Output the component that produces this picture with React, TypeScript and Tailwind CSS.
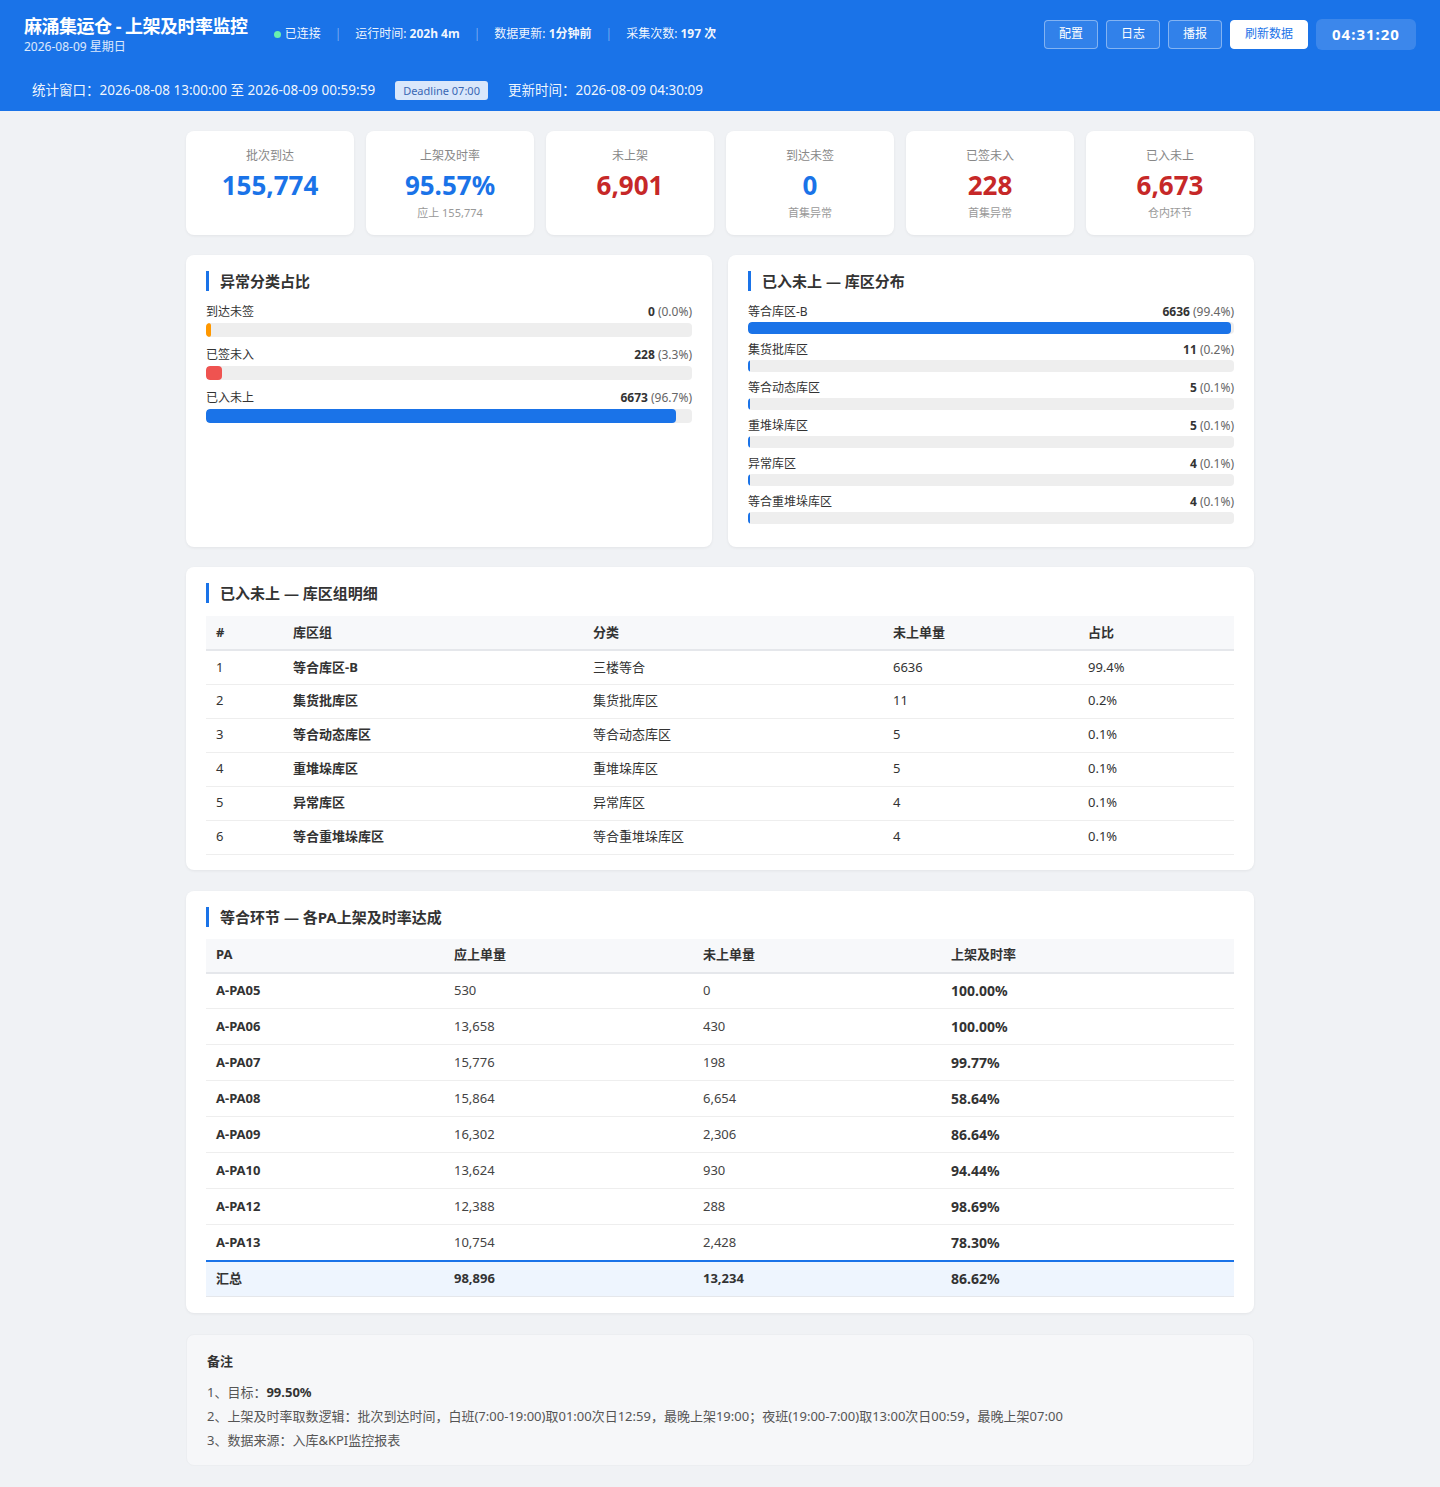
import React from "react";

const font = "font-['Noto_Sans','Noto_Sans_CJK_SC',sans-serif]";

const kpis = [
  { label: "批次到达", value: "155,774", color: "text-[#1a73e8]", sub: "" },
  { label: "上架及时率", value: "95.57%", color: "text-[#1a73e8]", sub: "应上 155,774" },
  { label: "未上架", value: "6,901", color: "text-[#c62828]", sub: "" },
  { label: "到达未签", value: "0", color: "text-[#1a73e8]", sub: "首集异常" },
  { label: "已签未入", value: "228", color: "text-[#c62828]", sub: "首集异常" },
  { label: "已入未上", value: "6,673", color: "text-[#c62828]", sub: "仓内环节" },
];

const abn = [
  { label: "到达未签", n: "0", p: "(0.0%)", w: 0, color: "#ff9800" },
  { label: "已签未入", n: "228", p: "(3.3%)", w: 3.3, color: "#ef5350" },
  { label: "已入未上", n: "6673", p: "(96.7%)", w: 96.7, color: "#1a73e8" },
];

const dist = [
  { label: "等合库区-B", n: "6636", p: "(99.4%)", w: 99.4 },
  { label: "集货批库区", n: "11", p: "(0.2%)", w: 0.2 },
  { label: "等合动态库区", n: "5", p: "(0.1%)", w: 0.1 },
  { label: "重堆垛库区", n: "5", p: "(0.1%)", w: 0.1 },
  { label: "异常库区", n: "4", p: "(0.1%)", w: 0.1 },
  { label: "等合重堆垛库区", n: "4", p: "(0.1%)", w: 0.1 },
];

const groups = [
  ["1", "等合库区-B", "三楼等合", "6636", "99.4%"],
  ["2", "集货批库区", "集货批库区", "11", "0.2%"],
  ["3", "等合动态库区", "等合动态库区", "5", "0.1%"],
  ["4", "重堆垛库区", "重堆垛库区", "5", "0.1%"],
  ["5", "异常库区", "异常库区", "4", "0.1%"],
  ["6", "等合重堆垛库区", "等合重堆垛库区", "4", "0.1%"],
];

const pas = [
  ["A-PA05", "530", "0", "100.00%"],
  ["A-PA06", "13,658", "430", "100.00%"],
  ["A-PA07", "15,776", "198", "99.77%"],
  ["A-PA08", "15,864", "6,654", "58.64%"],
  ["A-PA09", "16,302", "2,306", "86.64%"],
  ["A-PA10", "13,624", "930", "94.44%"],
  ["A-PA12", "12,388", "288", "98.69%"],
  ["A-PA13", "10,754", "2,428", "78.30%"],
];

function Title({ children }: { children: React.ReactNode }) {
  return (
    <div className="border-l-[3px] border-[#1a73e8] pl-[11px] h-5 leading-5 text-[15px] font-bold text-[#333]">
      {children}
    </div>
  );
}

function Sep() {
  return <span className="mx-[14px] text-white/40">|</span>;
}

export default function App() {
  return (
    <div className={`${font} bg-[#f0f2f5] min-h-[1487px] pb-[22px]`}>
      {/* Header */}
      <div className="bg-[#1a73e8] h-[111px] px-6 pt-[14px] text-white">
        <div className="flex items-center justify-between h-10">
          <div className="flex items-center">
            <div>
              <div className="text-[18px] font-bold leading-6 tracking-[-0.5px]">麻涌集运仓 - 上架及时率监控</div>
              <div className="text-xs leading-4 mt-[1px] text-white/85">2026-08-09 星期日</div>
            </div>
            <div className="ml-[26px] flex items-center text-xs text-white/95">
              <span className="w-[7px] h-[7px] rounded-full bg-[#69f0ae] mr-[4px]" />
              <span>已连接</span>
              <Sep />
              <span>运行时间: <b>202h 4m</b></span>
              <Sep />
              <span>数据更新: <b>1分钟前</b></span>
              <Sep />
              <span>采集次数: <b>197 次</b></span>
            </div>
          </div>
          <div className="flex items-center gap-2">
            {["配置", "日志", "播报"].map((t) => (
              <button key={t} className="h-[29px] px-[14px] rounded border border-white/40 bg-white/10 text-xs text-white">
                {t}
              </button>
            ))}
            <button className="h-[29px] px-[14px] rounded border border-white bg-white text-xs text-[#1a73e8]">
              刷新数据
            </button>
            <div className="h-[31px] w-[100px] rounded-md bg-white/15 flex items-center justify-center text-[15px] font-bold tracking-[1px]">
              04:31:20
            </div>
          </div>
        </div>
        <div className="mt-[21px] h-[30px] px-2 flex items-center text-[13.5px] text-white/95">
          <span>统计窗口：2026-08-08 13:00:00 至 2026-08-09 00:59:59</span>
          <span className="ml-5 h-[19px] px-2 rounded-[3px] bg-[#d9e7fb] text-[#3a67b4] text-[11px] leading-[19px]">Deadline 07:00</span>
          <span className="ml-5">更新时间：2026-08-09 04:30:09</span>
        </div>
      </div>

      <div className="w-[1068px] mx-auto pt-5">
        {/* KPI */}
        <div className="grid grid-cols-6 gap-3">
          {kpis.map((k) => (
            <div key={k.label} className="h-[104px] bg-white rounded-lg shadow-[0_1px_3px_rgba(0,0,0,0.06)] pt-4 text-center">
              <div className="text-xs leading-[18px] text-[#888]">{k.label}</div>
              <div className={`mt-1 text-[26px] leading-8 font-bold ${k.color}`}>{k.value}</div>
              {k.sub && <div className="mt-[4px] text-[11px] leading-4 text-[#999]">{k.sub}</div>}
            </div>
          ))}
        </div>

        {/* Two panels */}
        <div className="mt-5 grid grid-cols-2 gap-4">
          <div className="bg-white rounded-lg shadow-[0_1px_3px_rgba(0,0,0,0.06)] px-5 pt-4 pb-[17px]">
            <Title>异常分类占比</Title>
            <div className="mt-3">
              {abn.map((a) => (
                <div key={a.label} className="mb-[9px]">
                  <div className="flex justify-between text-xs leading-[18px] text-[#333]">
                    <span>{a.label}</span>
                    <span><b>{a.n}</b> <span className="text-[#666]">{a.p}</span></span>
                  </div>
                  <div className="mt-[2px] h-[14px] rounded bg-[#eee] overflow-hidden">
                    <div className="h-full rounded" style={{ width: `${a.w}%`, minWidth: 5, background: a.color }} />
                  </div>
                </div>
              ))}
            </div>
          </div>
          <div className="bg-white rounded-lg shadow-[0_1px_3px_rgba(0,0,0,0.06)] px-5 pt-4 pb-4">
            <Title>已入未上 — 库区分布</Title>
            <div className="mt-3">
              {dist.map((a) => (
                <div key={a.label} className="mb-[7px]">
                  <div className="flex justify-between text-xs leading-[18px] text-[#333]">
                    <span>{a.label}</span>
                    <span><b>{a.n}</b> <span className="text-[#666]">{a.p}</span></span>
                  </div>
                  <div className="mt-[1px] h-3 rounded bg-[#eee] overflow-hidden">
                    <div className="h-full rounded-sm bg-[#1a73e8]" style={{ width: `${a.w}%`, minWidth: 2 }} />
                  </div>
                </div>
              ))}
            </div>
          </div>
        </div>

        {/* Group table */}
        <div className="mt-5 bg-white rounded-lg shadow-[0_1px_3px_rgba(0,0,0,0.06)] px-5 pt-4 pb-[15px]">
          <Title>已入未上 — 库区组明细</Title>
          <table className="mt-[13px] w-full border-collapse text-[13px] text-[#333]">
            <thead>
              <tr className="bg-[#f7f8fa] border-b-2 border-[#e5e7eb]">
                <th className="h-[34px] w-[77px] pl-[10px] text-left font-bold">#</th>
                <th className="w-[300px] pl-[10px] text-left font-bold">库区组</th>
                <th className="w-[300px] pl-[10px] text-left font-bold">分类</th>
                <th className="w-[195px] pl-[10px] text-left font-bold">未上单量</th>
                <th className="pl-[10px] text-left font-bold">占比</th>
              </tr>
            </thead>
            <tbody>
              {groups.map((r) => (
                <tr key={r[0]} className="border-b border-[#eee]">
                  <td className="h-[34px] pl-[10px]">{r[0]}</td>
                  <td className="pl-[10px] font-bold">{r[1]}</td>
                  <td className="pl-[10px]">{r[2]}</td>
                  <td className="pl-[10px]">{r[3]}</td>
                  <td className="pl-[10px]">{r[4]}</td>
                </tr>
              ))}
            </tbody>
          </table>
        </div>

        {/* PA table */}
        <div className="mt-[21px] bg-white rounded-lg shadow-[0_1px_3px_rgba(0,0,0,0.06)] px-5 pt-4 pb-4">
          <Title>等合环节 — 各PA上架及时率达成</Title>
          <table className="mt-[12px] w-full border-collapse text-[13px] text-[#333]">
            <thead>
              <tr className="bg-[#f7f8fa] border-b-2 border-[#e5e7eb]">
                <th className="h-[34px] w-[238px] pl-[10px] text-left font-bold">PA</th>
                <th className="w-[249px] pl-[10px] text-left font-bold">应上单量</th>
                <th className="w-[248px] pl-[10px] text-left font-bold">未上单量</th>
                <th className="pl-[10px] text-left font-bold">上架及时率</th>
              </tr>
            </thead>
            <tbody>
              {pas.map((r, i) => (
                <tr key={r[0]} className={i === pas.length - 1 ? "" : "border-b border-[#eee]"}>
                  <td className="h-[36px] pl-[10px] font-bold">{r[0]}</td>
                  <td className="pl-[10px] text-[#444]">{r[1]}</td>
                  <td className="pl-[10px] text-[#444]">{r[2]}</td>
                  <td className="pl-[10px] font-bold text-[14px]">{r[3]}</td>
                </tr>
              ))}
              <tr className="bg-[#eef5fe] border-t-2 border-[#1a73e8] border-b border-b-[#e5e7eb]">
                <td className="h-[36px] pl-[10px] font-bold">汇总</td>
                <td className="pl-[10px] font-bold">98,896</td>
                <td className="pl-[10px] font-bold">13,234</td>
                <td className="pl-[10px] font-bold text-[14px]">86.62%</td>
              </tr>
            </tbody>
          </table>
        </div>

        {/* Notes */}
        <div className="mt-[21px] bg-[#f6f7f9] rounded-lg border border-[#eceef1] px-5 pt-4 pb-[13px]">
          <div className="text-[13px] leading-5 font-bold text-[#333]">备注</div>
          <div className="mt-[9px] text-[13px] leading-6 text-[#555]">
            <div>1、目标：<b className="text-[#333]">99.50%</b></div>
            <div>2、上架及时率取数逻辑：批次到达时间，白班(7:00-19:00)取01:00次日12:59，最晚上架19:00；夜班(19:00-7:00)取13:00次日00:59，最晚上架07:00</div>
            <div>3、数据来源：入库&amp;KPI监控报表</div>
          </div>
        </div>
      </div>
    </div>
  );
}
